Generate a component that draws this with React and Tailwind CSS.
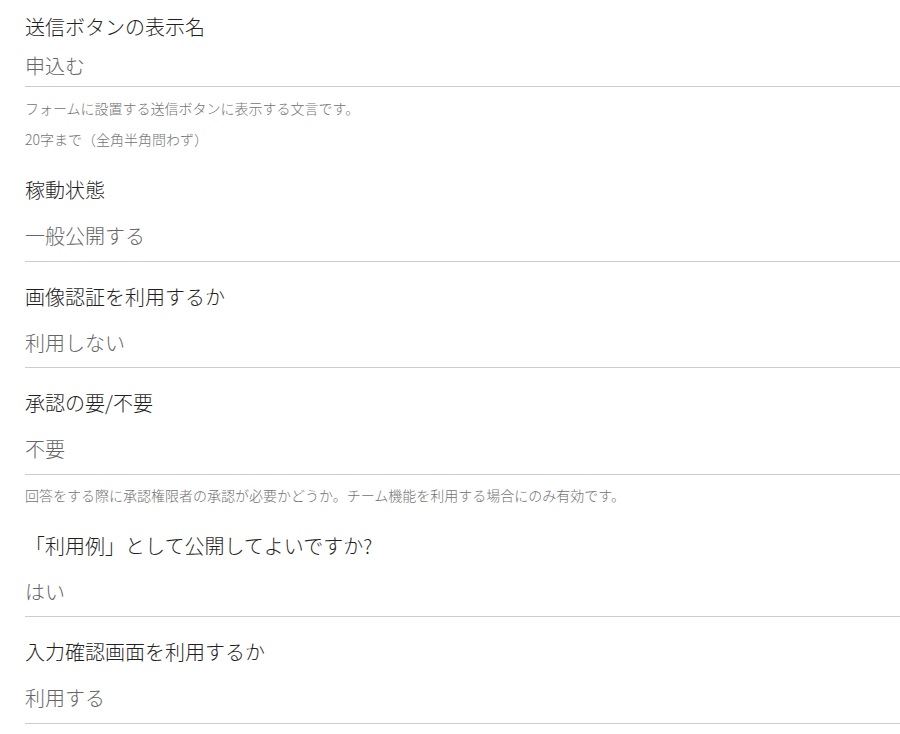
export default function App() {
  return (
    <div className="w-[900px] h-[734px] bg-white pl-[25px] overflow-hidden font-light" style={{ fontFamily: '"Noto Sans CJK JP", "Noto Sans", sans-serif' }}>
      {/* Section 1 */}
      <div className="pt-[13px]">
        <div className="text-[20px] leading-7 text-[#1f1f1f]">送信ボタンの表示名</div>
        <div className="mt-[11px] text-[20px] leading-7 text-[#666666] pb-[6px] border-b border-[#cccccc]">申込む</div>
        <div className="mt-[11px] text-[14px] leading-5 text-[#737373]">フォームに設置する送信ボタンに表示する文言です。</div>
        <div className="mt-[11px] text-[14px] leading-5 text-[#737373]">20字まで（全角半角問わず）</div>
      </div>
      {/* Section 2 */}
      <div className="pt-[27px]">
        <div className="text-[20px] leading-7 text-[#1f1f1f]">稼動状態</div>
        <div className="mt-[18px] text-[20px] leading-7 text-[#666666] pb-[10.5px] border-b border-[#cccccc]">一般公開する</div>
      </div>
      {/* Section 3 */}
      <div className="pt-[21px]">
        <div className="text-[20px] leading-7 text-[#1f1f1f]">画像認証を利用するか</div>
        <div className="mt-[18px] text-[20px] leading-7 text-[#666666] pb-[10.5px] border-b border-[#cccccc]">利用しない</div>
      </div>
      {/* Section 4 */}
      <div className="pt-[21px]">
        <div className="text-[20px] leading-7 text-[#1f1f1f]">承認の要/不要</div>
        <div className="mt-[18px] text-[20px] leading-7 text-[#666666] pb-[10.5px] border-b border-[#cccccc]">不要</div>
        <div className="mt-[10px] text-[14px] leading-5 text-[#737373]">回答をする際に承認権限者の承認が必要かどうか。チーム機能を利用する場合にのみ有効です。</div>
      </div>
      {/* Section 5 */}
      <div className="pt-[27px]">
        <div className="text-[20px] leading-7 text-[#1f1f1f]">「利用例」として公開してよいですか?</div>
        <div className="mt-[18px] text-[20px] leading-7 text-[#666666] pb-[10.5px] border-b border-[#cccccc]">はい</div>
      </div>
      {/* Section 6 */}
      <div className="pt-[21px]">
        <div className="text-[20px] leading-7 text-[#1f1f1f]">入力確認画面を利用するか</div>
        <div className="mt-[18px] text-[20px] leading-7 text-[#666666] pb-[10.5px] border-b border-[#cccccc]">利用する</div>
      </div>
    </div>
  );
}
